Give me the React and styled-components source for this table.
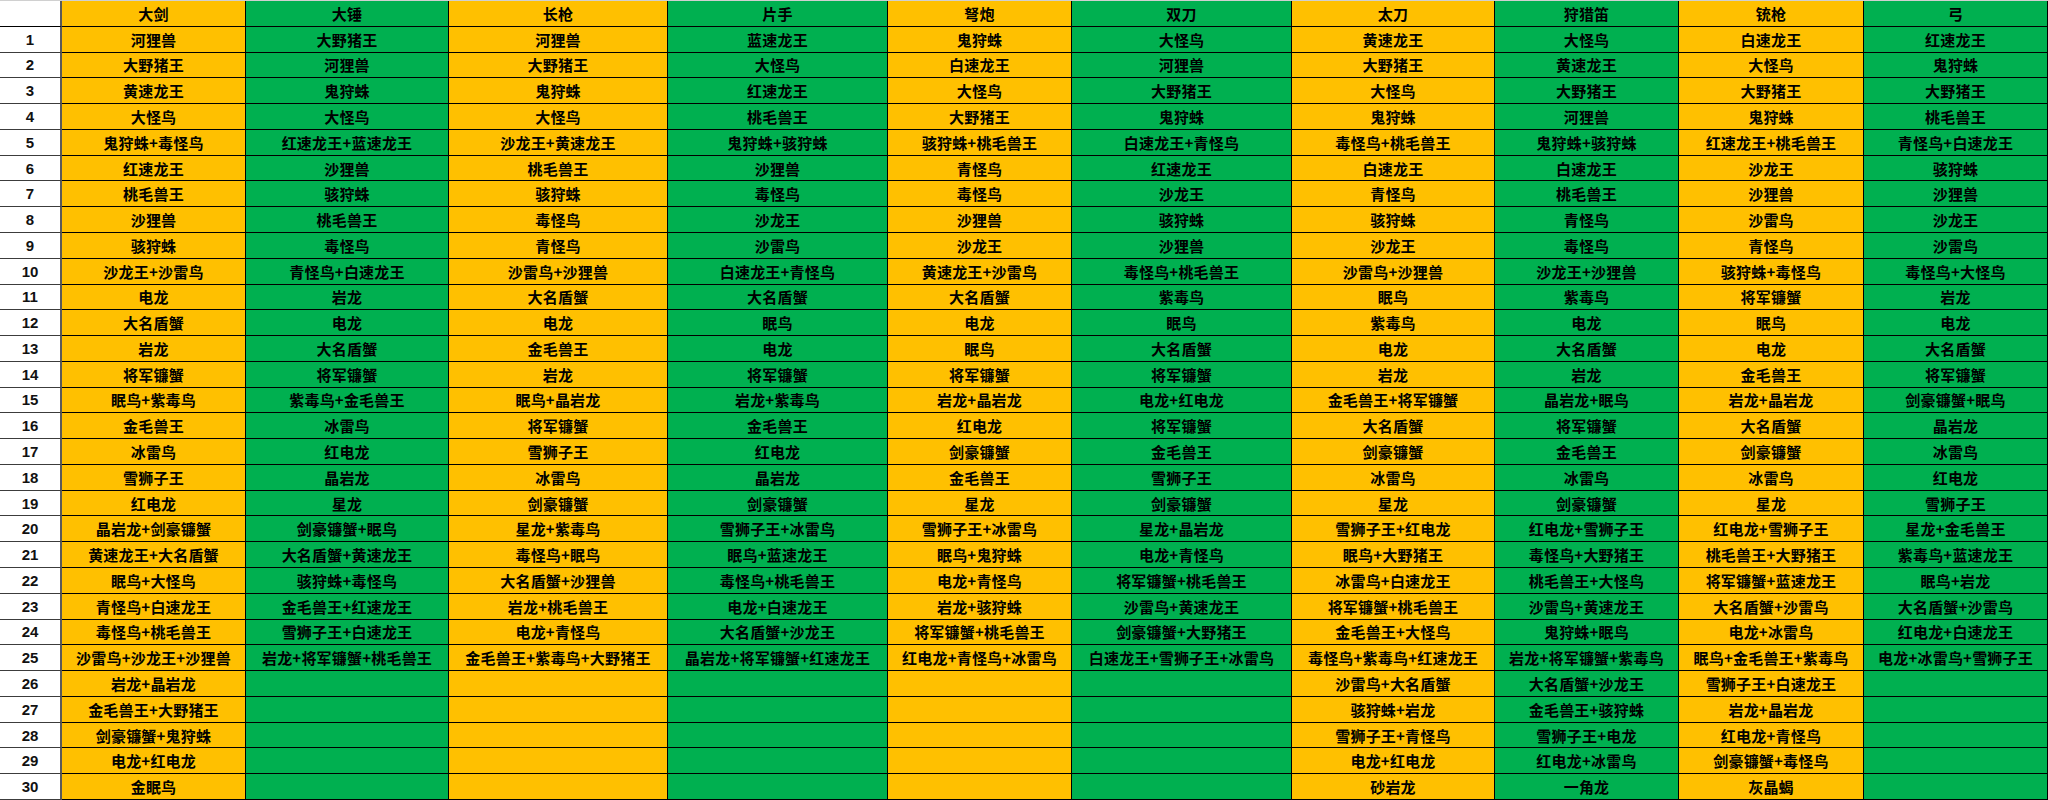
import React from "react";
import styled, { createGlobalStyle } from "styled-components";

const GlobalStyle = createGlobalStyle`
  html, body {
    margin: 0;
    padding: 0;
    background: #ffffff;
  }
  body {
    font-family: "Noto Sans CJK SC", "Noto Sans", sans-serif;
  }
`;

const YELLOW = "#FFC000";
const GREEN = "#00B050";

const columns = [
  {
    title: "大剑",
    tone: "yellow",
    width: 184,
    items: [
      "河狸兽", "大野猪王", "黄速龙王", "大怪鸟", "鬼狩蛛+毒怪鸟", "红速龙王", "桃毛兽王", "沙狸兽", "骇狩蛛", "沙龙王+沙雷鸟",
      "电龙", "大名盾蟹", "岩龙", "将军镰蟹", "眠鸟+紫毒鸟", "金毛兽王", "冰雷鸟", "雪狮子王", "红电龙", "晶岩龙+剑豪镰蟹",
      "黄速龙王+大名盾蟹", "眠鸟+大怪鸟", "青怪鸟+白速龙王", "毒怪鸟+桃毛兽王", "沙雷鸟+沙龙王+沙狸兽", "岩龙+晶岩龙", "金毛兽王+大野猪王", "剑豪镰蟹+鬼狩蛛", "电龙+红电龙", "金眠鸟",
    ],
  },
  {
    title: "大锤",
    tone: "green",
    width: 203,
    items: [
      "大野猪王", "河狸兽", "鬼狩蛛", "大怪鸟", "红速龙王+蓝速龙王", "沙狸兽", "骇狩蛛", "桃毛兽王", "毒怪鸟", "青怪鸟+白速龙王",
      "岩龙", "电龙", "大名盾蟹", "将军镰蟹", "紫毒鸟+金毛兽王", "冰雷鸟", "红电龙", "晶岩龙", "星龙", "剑豪镰蟹+眠鸟",
      "大名盾蟹+黄速龙王", "骇狩蛛+毒怪鸟", "金毛兽王+红速龙王", "雪狮子王+白速龙王", "岩龙+将军镰蟹+桃毛兽王",
    ],
  },
  {
    title: "长枪",
    tone: "yellow",
    width: 219,
    items: [
      "河狸兽", "大野猪王", "鬼狩蛛", "大怪鸟", "沙龙王+黄速龙王", "桃毛兽王", "骇狩蛛", "毒怪鸟", "青怪鸟", "沙雷鸟+沙狸兽",
      "大名盾蟹", "电龙", "金毛兽王", "岩龙", "眠鸟+晶岩龙", "将军镰蟹", "雪狮子王", "冰雷鸟", "剑豪镰蟹", "星龙+紫毒鸟",
      "毒怪鸟+眠鸟", "大名盾蟹+沙狸兽", "岩龙+桃毛兽王", "电龙+青怪鸟", "金毛兽王+紫毒鸟+大野猪王",
    ],
  },
  {
    title: "片手",
    tone: "green",
    width: 220,
    items: [
      "蓝速龙王", "大怪鸟", "红速龙王", "桃毛兽王", "鬼狩蛛+骇狩蛛", "沙狸兽", "毒怪鸟", "沙龙王", "沙雷鸟", "白速龙王+青怪鸟",
      "大名盾蟹", "眠鸟", "电龙", "将军镰蟹", "岩龙+紫毒鸟", "金毛兽王", "红电龙", "晶岩龙", "剑豪镰蟹", "雪狮子王+冰雷鸟",
      "眠鸟+蓝速龙王", "毒怪鸟+桃毛兽王", "电龙+白速龙王", "大名盾蟹+沙龙王", "晶岩龙+将军镰蟹+红速龙王",
    ],
  },
  {
    title: "弩炮",
    tone: "yellow",
    width: 184,
    items: [
      "鬼狩蛛", "白速龙王", "大怪鸟", "大野猪王", "骇狩蛛+桃毛兽王", "青怪鸟", "毒怪鸟", "沙狸兽", "沙龙王", "黄速龙王+沙雷鸟",
      "大名盾蟹", "电龙", "眠鸟", "将军镰蟹", "岩龙+晶岩龙", "红电龙", "剑豪镰蟹", "金毛兽王", "星龙", "雪狮子王+冰雷鸟",
      "眠鸟+鬼狩蛛", "电龙+青怪鸟", "岩龙+骇狩蛛", "将军镰蟹+桃毛兽王", "红电龙+青怪鸟+冰雷鸟",
    ],
  },
  {
    title: "双刀",
    tone: "green",
    width: 220,
    items: [
      "大怪鸟", "河狸兽", "大野猪王", "鬼狩蛛", "白速龙王+青怪鸟", "红速龙王", "沙龙王", "骇狩蛛", "沙狸兽", "毒怪鸟+桃毛兽王",
      "紫毒鸟", "眠鸟", "大名盾蟹", "将军镰蟹", "电龙+红电龙", "将军镰蟹", "金毛兽王", "雪狮子王", "剑豪镰蟹", "星龙+晶岩龙",
      "电龙+青怪鸟", "将军镰蟹+桃毛兽王", "沙雷鸟+黄速龙王", "剑豪镰蟹+大野猪王", "白速龙王+雪狮子王+冰雷鸟",
    ],
  },
  {
    title: "太刀",
    tone: "yellow",
    width: 203,
    items: [
      "黄速龙王", "大野猪王", "大怪鸟", "鬼狩蛛", "毒怪鸟+桃毛兽王", "白速龙王", "青怪鸟", "骇狩蛛", "沙龙王", "沙雷鸟+沙狸兽",
      "眠鸟", "紫毒鸟", "电龙", "岩龙", "金毛兽王+将军镰蟹", "大名盾蟹", "剑豪镰蟹", "冰雷鸟", "星龙", "雪狮子王+红电龙",
      "眠鸟+大野猪王", "冰雷鸟+白速龙王", "将军镰蟹+桃毛兽王", "金毛兽王+大怪鸟", "毒怪鸟+紫毒鸟+红速龙王", "沙雷鸟+大名盾蟹", "骇狩蛛+岩龙", "雪狮子王+青怪鸟", "电龙+红电龙", "砂岩龙",
    ],
  },
  {
    title: "狩猎笛",
    tone: "green",
    width: 184,
    items: [
      "大怪鸟", "黄速龙王", "大野猪王", "河狸兽", "鬼狩蛛+骇狩蛛", "白速龙王", "桃毛兽王", "青怪鸟", "毒怪鸟", "沙龙王+沙狸兽",
      "紫毒鸟", "电龙", "大名盾蟹", "岩龙", "晶岩龙+眠鸟", "将军镰蟹", "金毛兽王", "冰雷鸟", "剑豪镰蟹", "红电龙+雪狮子王",
      "毒怪鸟+大野猪王", "桃毛兽王+大怪鸟", "沙雷鸟+黄速龙王", "鬼狩蛛+眠鸟", "岩龙+将军镰蟹+紫毒鸟", "大名盾蟹+沙龙王", "金毛兽王+骇狩蛛", "雪狮子王+电龙", "红电龙+冰雷鸟", "一角龙",
    ],
  },
  {
    title: "铳枪",
    tone: "yellow",
    width: 185,
    items: [
      "白速龙王", "大怪鸟", "大野猪王", "鬼狩蛛", "红速龙王+桃毛兽王", "沙龙王", "沙狸兽", "沙雷鸟", "青怪鸟", "骇狩蛛+毒怪鸟",
      "将军镰蟹", "眠鸟", "电龙", "金毛兽王", "岩龙+晶岩龙", "大名盾蟹", "剑豪镰蟹", "冰雷鸟", "星龙", "红电龙+雪狮子王",
      "桃毛兽王+大野猪王", "将军镰蟹+蓝速龙王", "大名盾蟹+沙雷鸟", "电龙+冰雷鸟", "眠鸟+金毛兽王+紫毒鸟", "雪狮子王+白速龙王", "岩龙+晶岩龙", "红电龙+青怪鸟", "剑豪镰蟹+毒怪鸟", "灰晶蝎",
    ],
  },
  {
    title: "弓",
    tone: "green",
    width: 184,
    items: [
      "红速龙王", "鬼狩蛛", "大野猪王", "桃毛兽王", "青怪鸟+白速龙王", "骇狩蛛", "沙狸兽", "沙龙王", "沙雷鸟", "毒怪鸟+大怪鸟",
      "岩龙", "电龙", "大名盾蟹", "将军镰蟹", "剑豪镰蟹+眠鸟", "晶岩龙", "冰雷鸟", "红电龙", "雪狮子王", "星龙+金毛兽王",
      "紫毒鸟+蓝速龙王", "眠鸟+岩龙", "大名盾蟹+沙雷鸟", "红电龙+白速龙王", "电龙+冰雷鸟+雪狮子王",
    ],
  },
];

const ROWS = 30;

const Sheet = styled.div`
  display: grid;
  grid-template-columns: ${(p) => p.$cols};
  grid-template-rows: repeat(${ROWS + 1}, 1fr);
  width: 2048px;
  height: 800px;
  box-sizing: border-box;
  border-top: 1px solid #d0d0d0;
  overflow: hidden;
`;

const Cell = styled.div`
  box-sizing: border-box;
  display: flex;
  align-items: center;
  justify-content: center;
  min-width: 0;
  white-space: nowrap;
  overflow: hidden;
  border-right: 1px solid #000;
  border-bottom: 1px solid #000;
  color: #000;
  font-family: "Noto Sans CJK SC", "Noto Sans", sans-serif;
  font-size: 15px;
  font-weight: 700;
  line-height: 1;
`;

const IndexCell = styled(Cell)`
  background: #ffffff;
  border-right: 2px solid #5a5a5a;
  border-bottom-color: ${(p) => (p.$head ? "#000" : "#3c3c3c")};
  font-family: "Liberation Sans", "Noto Sans", sans-serif;
  font-size: 15px;
  font-weight: 700;
  color: #111;
`;

const DataCell = styled(Cell)`
  background: ${(p) => (p.$tone === "green" ? GREEN : YELLOW)};
  letter-spacing: 0.2px;
`;

export default function App() {
  const template = ["62px", ...columns.map((c) => `${c.width}px`)].join(" ");
  const rows = Array.from({ length: ROWS }, (_, i) => i);

  return (
    <>
      <GlobalStyle />
      <Sheet $cols={template}>
        <IndexCell $head />
        {columns.map((c) => (
          <DataCell key={c.title} $tone={c.tone}>
            {c.title}
          </DataCell>
        ))}
        {rows.map((r) => (
          <React.Fragment key={r}>
            <IndexCell>{r + 1}</IndexCell>
            {columns.map((c) => (
              <DataCell key={c.title} $tone={c.tone}>
                {c.items[r] || ""}
              </DataCell>
            ))}
          </React.Fragment>
        ))}
      </Sheet>
    </>
  );
}
